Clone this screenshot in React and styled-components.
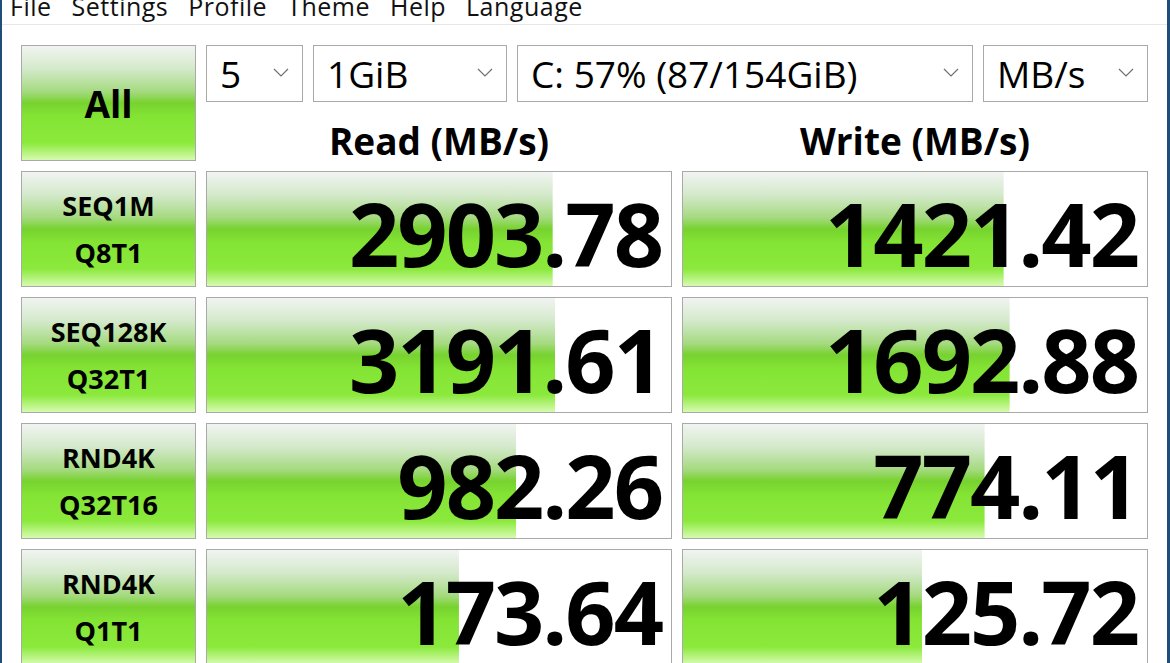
import React from 'react';
import styled, { createGlobalStyle } from 'styled-components';

const GlobalStyle = createGlobalStyle`
  html, body {
    margin: 0;
    padding: 0;
    background: #ffffff;
    overflow: hidden;
  }
  body {
    font-family: "Open Sans", "Noto Sans", sans-serif;
    color: #000;
  }
`;

const green = `linear-gradient(to bottom, #f1f4f1 0%, #d4e9cb 20%, #a5da80 40%, #77d22f 50%, #84e434 62%, #8be93c 85%, #d6fbb0 100%)`;

const rows = [
  { name: 'SEQ1M', sub: 'Q8T1', read: '2903.78', readPct: 74.5, write: '1421.42', writePct: 69.1 },
  { name: 'SEQ128K', sub: 'Q32T1', read: '3191.61', readPct: 75.1, write: '1692.88', writePct: 70.4 },
  { name: 'RND4K', sub: 'Q32T16', read: '982.26', readPct: 66.7, write: '774.11', writePct: 65.0 },
  { name: 'RND4K', sub: 'Q1T1', read: '173.64', readPct: 54.3, write: '125.72', writePct: 51.5 },
];

export default function App() {
  return (
    <>
      <GlobalStyle />
      <Window>
        <MenuBar>
          {['File', 'Settings', 'Profile', 'Theme', 'Help', 'Language'].map((m) => (
            <MenuItem key={m}>{m}</MenuItem>
          ))}
        </MenuBar>
        <Board>
          <TestButton $big>All</TestButton>
          <TopRight>
            <Selects>
              <Select $w={97}>5<Chevron /></Select>
              <Select $w={194}>1GiB<Chevron /></Select>
              <Select $w={456}>C: 57% (87/154GiB)<Chevron /></Select>
              <Select $w={165}>MB/s<Chevron /></Select>
            </Selects>
            <Headers>
              <Header>Read (MB/s)</Header>
              <Header>Write (MB/s)</Header>
            </Headers>
          </TopRight>
          {rows.map((r, i) => (
            <React.Fragment key={i}>
              <TestButton>
                <span>{r.name}</span>
                <span>{r.sub}</span>
              </TestButton>
              <Result style={{ backgroundSize: `${r.readPct}% 100%` }}>{r.read}</Result>
              <Result style={{ backgroundSize: `${r.writePct}% 100%` }}>{r.write}</Result>
            </React.Fragment>
          ))}
        </Board>
      </Window>
    </>
  );
}

function Chevron() {
  return (
    <ChevronSvg width="16" height="9" viewBox="0 0 16 9">
      <path d="M1 1 L8 8 L15 1" fill="none" stroke="#707070" strokeWidth="1.2" />
    </ChevronSvg>
  );
}

const Window = styled.div`
  width: 1170px;
  height: 663px;
  box-sizing: border-box;
  border-left: 2px solid #1f4f78;
  border-right: 3px solid #1f4f78;
  background: #fff;
  overflow: hidden;
`;

const MenuBar = styled.div`
  height: 25px;
  box-sizing: border-box;
  border-bottom: 1px solid #e8e8e8;
  display: flex;
  align-items: flex-end;
  padding-left: 8px;
  gap: 20px;
  overflow: hidden;
`;

const MenuItem = styled.div`
  font-size: 25px;
  line-height: 25px;
  padding-bottom: 5px;
  letter-spacing: 0.5px;
  color: #111;
`;

const Board = styled.div`
  display: grid;
  grid-template-columns: 175px 466px 466px;
  grid-auto-rows: 116px;
  column-gap: 10px;
  row-gap: 10px;
  padding: 20px 0 0 19px;
`;

const TestButton = styled.div`
  box-sizing: border-box;
  border: 1px solid #a9a9a9;
  background: ${green};
  display: flex;
  flex-direction: column;
  align-items: center;
  justify-content: center;
  gap: 20px;
  font-weight: 700;
  font-size: ${(p) => (p.$big ? '37px' : '27px')};
  line-height: 1;
  color: #000;
  & > span {
    display: block;
  }
`;

const TopRight = styled.div`
  grid-column: 2 / 4;
  display: flex;
  flex-direction: column;
`;

const Selects = styled.div`
  display: flex;
  gap: 10px;
  height: 57px;
`;

const Select = styled.div`
  width: ${(p) => p.$w}px;
  box-sizing: border-box;
  border: 1px solid #a9a9a9;
  display: flex;
  align-items: center;
  justify-content: space-between;
  padding: 0 13px 0 13px;
  font-size: 37px;
  color: #000;
`;

const ChevronSvg = styled.svg`
  flex: none;
  margin-bottom: 2px;
`;

const Headers = styled.div`
  flex: 1;
  display: grid;
  grid-template-columns: 466px 466px;
  column-gap: 10px;
  align-items: end;
`;

const Header = styled.div`
  text-align: center;
  font-weight: 700;
  font-size: 37px;
  line-height: 1;
  padding-bottom: 2px;
`;

const Result = styled.div`
  box-sizing: border-box;
  border: 1px solid #a9a9a9;
  background-color: #fff;
  background-image: ${green};
  background-repeat: no-repeat;
  display: flex;
  align-items: center;
  justify-content: flex-end;
  padding: 8px 9px 0 0;
  font-weight: 700;
  font-size: 88px;
  line-height: 1;
  letter-spacing: -2px;
  color: #000;
`;
